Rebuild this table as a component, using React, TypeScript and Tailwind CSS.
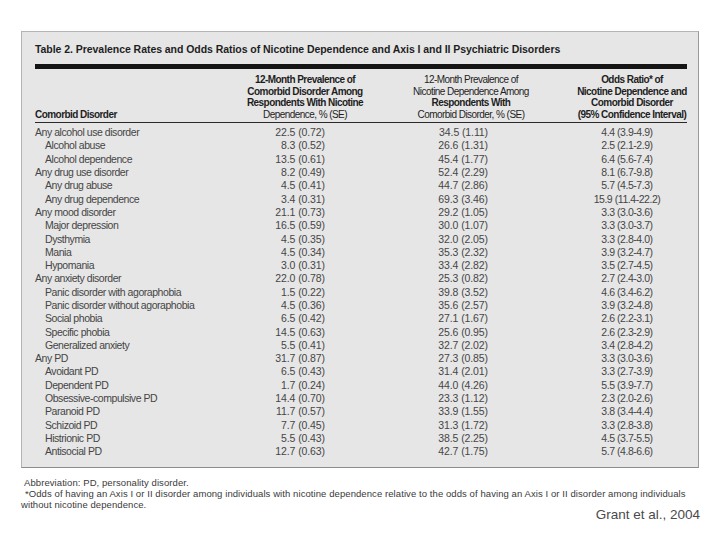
const rows: [string, boolean, string, string, string][] = [
  ["Any alcohol use disorder", false, "22.5 (0.72)", "34.5 (1.11)", "4.4 (3.9-4.9)"],
  ["Alcohol abuse", true, "8.3 (0.52)", "26.6 (1.31)", "2.5 (2.1-2.9)"],
  ["Alcohol dependence", true, "13.5 (0.61)", "45.4 (1.77)", "6.4 (5.6-7.4)"],
  ["Any drug use disorder", false, "8.2 (0.49)", "52.4 (2.29)", "8.1 (6.7-9.8)"],
  ["Any drug abuse", true, "4.5 (0.41)", "44.7 (2.86)", "5.7 (4.5-7.3)"],
  ["Any drug dependence", true, "3.4 (0.31)", "69.3 (3.46)", "15.9 (11.4-22.2)"],
  ["Any mood disorder", false, "21.1 (0.73)", "29.2 (1.05)", "3.3 (3.0-3.6)"],
  ["Major depression", true, "16.5 (0.59)", "30.0 (1.07)", "3.3 (3.0-3.7)"],
  ["Dysthymia", true, "4.5 (0.35)", "32.0 (2.05)", "3.3 (2.8-4.0)"],
  ["Mania", true, "4.5 (0.34)", "35.3 (2.32)", "3.9 (3.2-4.7)"],
  ["Hypomania", true, "3.0 (0.31)", "33.4 (2.82)", "3.5 (2.7-4.5)"],
  ["Any anxiety disorder", false, "22.0 (0.78)", "25.3 (0.82)", "2.7 (2.4-3.0)"],
  ["Panic disorder with agoraphobia", true, "1.5 (0.22)", "39.8 (3.52)", "4.6 (3.4-6.2)"],
  ["Panic disorder without agoraphobia", true, "4.5 (0.36)", "35.6 (2.57)", "3.9 (3.2-4.8)"],
  ["Social phobia", true, "6.5 (0.42)", "27.1 (1.67)", "2.6 (2.2-3.1)"],
  ["Specific phobia", true, "14.5 (0.63)", "25.6 (0.95)", "2.6 (2.3-2.9)"],
  ["Generalized anxiety", true, "5.5 (0.41)", "32.7 (2.02)", "3.4 (2.8-4.2)"],
  ["Any PD", false, "31.7 (0.87)", "27.3 (0.85)", "3.3 (3.0-3.6)"],
  ["Avoidant PD", true, "6.5 (0.43)", "31.4 (2.01)", "3.3 (2.7-3.9)"],
  ["Dependent PD", true, "1.7 (0.24)", "44.0 (4.26)", "5.5 (3.9-7.7)"],
  ["Obsessive-compulsive PD", true, "14.4 (0.70)", "23.3 (1.12)", "2.3 (2.0-2.6)"],
  ["Paranoid PD", true, "11.7 (0.57)", "33.9 (1.55)", "3.8 (3.4-4.4)"],
  ["Schizoid PD", true, "7.7 (0.45)", "31.3 (1.72)", "3.3 (2.8-3.8)"],
  ["Histrionic PD", true, "5.5 (0.43)", "38.5 (2.25)", "4.5 (3.7-5.5)"],
  ["Antisocial PD", true, "12.7 (0.63)", "42.7 (1.75)", "5.7 (4.8-6.6)"],
]

// table uses a condensed look in the original, so tighten Arial-metric text
const cols = "grid grid-cols-[190px_160px_172px_130px]"

export default function App() {
  return (
    <div className="h-[540px] w-[720px] overflow-hidden bg-white font-['Liberation_Sans',Arial,sans-serif]">
      <div className="h-[31px]" />
      {/* table box */}
      <div className="ml-[21px] h-[437px] w-[678px] border border-[#b4b4b4] border-b-[#8c8c8c] border-r-[#9a9a9a] bg-[#e6e6e6] pl-[13px] pr-[11px]">
        <div className="pt-[11px] text-[10.5px] leading-[13px] font-bold tracking-[-0.05px] whitespace-nowrap text-[#1e1e1e]">
          Table 2. Prevalence Rates and Odds Ratios of Nicotine Dependence and Axis I and II Psychiatric Disorders
        </div>
        <div className="mt-[8px] h-[5px] bg-[#151515]" />

        {/* header */}
        <div className={`${cols} items-end pt-[5px] pb-[2px] text-[10px] leading-[11.5px] tracking-[-0.55px] whitespace-nowrap text-[#1e1e1e]`}>
          <div className="font-bold">Comorbid Disorder</div>
          <div className="flex flex-col items-center font-bold">
            <span>12-Month Prevalence of</span>
            <span>Comorbid Disorder Among</span>
            <span>Respondents With Nicotine</span>
            <span className="font-normal">Dependence, % (SE)</span>
          </div>
          <div className="flex flex-col items-center">
            <span>12-Month Prevalence of</span>
            <span>Nicotine Dependence Among</span>
            <span className="font-bold">Respondents With</span>
            <span>Comorbid Disorder, % (SE)</span>
          </div>
          <div className="flex flex-col items-center pl-[20px] font-bold">
            <span>Odds Ratio* of</span>
            <span>Nicotine Dependence and</span>
            <span>Comorbid Disorder</span>
            <span>(95% Confidence Interval)</span>
          </div>
        </div>
        <div className="h-px bg-[#2a2a2a]" />

        {/* body */}
        <div className="pt-[3px] text-[10.5px] whitespace-nowrap text-[#454545]">
          {rows.map(([name, sub, a, b, c]) => (
            <div key={name} className={`${cols} h-[13.3px] items-center leading-[13px]`}>
              <div className={sub ? "pl-[10px] tracking-[-0.45px]" : "tracking-[-0.45px]"}>{name}</div>
              <div className="pr-[60px] text-right tracking-[-0.1px]">{a}</div>
              <div className="pr-[69px] text-right tracking-[-0.1px]">{b}</div>
              <div className="flex justify-center pl-[10px] tracking-[-0.45px]">{c}</div>
            </div>
          ))}
        </div>
      </div>

      {/* footnotes */}
      <div className="mt-[9px] pl-[21px] text-[9.5px] leading-[11px] tracking-[0.08px] whitespace-nowrap text-[#3a3a3a]">
        <p className="pl-[3px]">Abbreviation: PD, personality disorder.</p>
        <p className="indent-[4px]">
          *Odds of having an Axis I or II disorder among individuals with nicotine dependence relative to the odds of having an Axis I or II disorder among individuals
          <br />
          without nicotine dependence.
        </p>
      </div>
      <div className="-mt-[3px] flex justify-end pr-[20px]">
        <span className="text-[13.5px] leading-[16px] text-[#4a4a4a]">Grant et al., 2004</span>
      </div>
    </div>
  )
}
